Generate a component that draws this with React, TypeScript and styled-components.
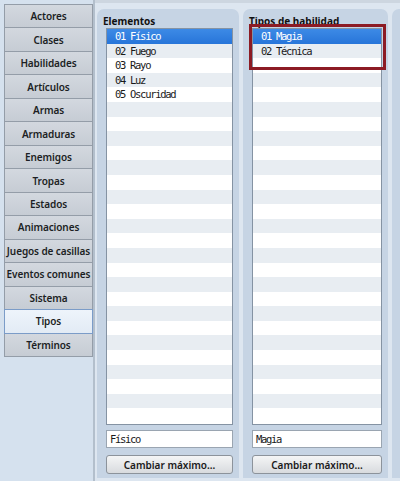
import React from 'react';
import styled, { createGlobalStyle } from 'styled-components';

const GlobalStyle = createGlobalStyle`
  html, body {
    margin: 0;
    padding: 0;
    background: #d6e1ee;
    font-family: "Noto Sans", "DejaVu Sans", sans-serif;
  }
`;

const menuItems = [
  'Actores', 'Clases', 'Habilidades', 'Artículos', 'Armas', 'Armaduras',
  'Enemigos', 'Tropas', 'Estados', 'Animaciones', 'Juegos de casillas',
  'Eventos comunes', 'Sistema', 'Tipos', 'Términos',
];

const elementos = ['01 Físico', '02 Fuego', '03 Rayo', '04 Luz', '05 Oscuridad'];
const tiposHabilidad = ['01 Magia', '02 Técnica'];

const ROWS = 27;

const Window = styled.div`
  display: flex;
  width: 400px;
  height: 481px;
  overflow: hidden;
`;

const Sidebar = styled.div`
  width: 89px;
  flex-shrink: 0;
  padding: 4px 0 0 4px;
  display: flex;
  flex-direction: column;
  border-right: 2px solid #b3bfcc;
  background: #d5e1ee;
`;

const MenuButton = styled.div<{ $active?: boolean }>`
  height: 24.47px;
  flex-shrink: 0;
  box-sizing: border-box;
  display: flex;
  align-items: center;
  justify-content: center;
  font-size: 10px;
  font-weight: 600;
  color: #1c1f24;
  white-space: nowrap;
  letter-spacing: -0.1px;
  border: 1px solid ${p => (p.$active ? '#7b9cc8' : '#949da8')};
  background: ${p => (p.$active
    ? 'linear-gradient(#eef4fb, #e2ebf5)'
    : 'linear-gradient(#d3d8df, #c6ccd4)')};
  margin-top: -1px;
  position: relative;
  z-index: ${p => (p.$active ? 1 : 0)};
  &:first-child { margin-top: 0; }
`;

const Main = styled.div`
  flex: 1;
  display: flex;
  gap: 4px;
  padding: 9px 0 0 2px;
  background: linear-gradient(#cdd6e0 0, #cdd6e0 3px, #dde6f0 3px);
`;

const Panel = styled.div<{ $w: number }>`
  position: relative;
  width: ${p => p.$w}px;
  flex-shrink: 0;
  height: 469px;
  box-sizing: border-box;
  padding: 6px 6px 0 9px;
  background: #c6d4e4;
  border-radius: 7px 7px 0 0;
  display: flex;
  flex-direction: column;
`;

const PanelTitle = styled.div`
  font-size: 10px;
  font-weight: 700;
  color: #111;
  margin-left: -3px;
  height: 13px;
  line-height: 13px;
  white-space: nowrap;
`;

const List = styled.div`
  height: 397px;
  box-sizing: border-box;
  border: 1px solid #8593a3;
  background: #fff;
  overflow: hidden;
`;

const Row = styled.div<{ $selected?: boolean; $alt?: boolean }>`
  height: 14.6px;
  line-height: 14.6px;
  padding-left: 8px;
  font-family: "DejaVu Sans Mono", "Liberation Mono", monospace;
  font-size: 10.5px;
  letter-spacing: -1.3px;
  white-space: nowrap;
  color: ${p => (p.$selected ? '#fff' : '#1a1a1a')};
  background: ${p => (p.$selected
    ? 'linear-gradient(#3d8ae6, #2775d9)'
    : p.$alt ? '#e8edf2' : '#ffffff')};
`;

const TextField = styled.div`
  margin-top: 5px;
  height: 18px;
  box-sizing: border-box;
  border: 1px solid #9aa5b1;
  background: #fff;
  padding-left: 3px;
  line-height: 16px;
  font-family: "DejaVu Sans Mono", "Liberation Mono", monospace;
  font-size: 10.5px;
  letter-spacing: -1.3px;
  color: #1a1a1a;
`;

const ActionButton = styled.div`
  margin-top: 7px;
  height: 19px;
  box-sizing: border-box;
  border: 1px solid #8c939b;
  border-radius: 3px;
  background: linear-gradient(#f4f5f6, #d8dbde);
  display: flex;
  align-items: center;
  justify-content: center;
  font-size: 10px;
  font-weight: 600;
  color: #1a1a1a;
`;

const Highlight = styled.div`
  position: absolute;
  left: 6px;
  top: 15px;
  width: 137px;
  height: 46px;
  box-sizing: border-box;
  border: 3px solid #8c1b24;
  pointer-events: none;
`;

const TypeList: React.FC<{ items: string[] }> = ({ items }) => (
  <List>
    {Array.from({ length: ROWS }).map((_, i) => (
      <Row key={i} $selected={i === 0} $alt={i % 2 === 1}>
        {items[i] ?? ''}
      </Row>
    ))}
  </List>
);

const App: React.FC = () => {
  return (
    <>
      <GlobalStyle />
      <Window>
        <Sidebar>
          {menuItems.map(m => (
            <MenuButton key={m} $active={m === 'Tipos'}>{m}</MenuButton>
          ))}
        </Sidebar>
        <Main>
          <Panel $w={142}>
            <PanelTitle>Elementos</PanelTitle>
            <TypeList items={elementos} />
            <TextField>Físico</TextField>
            <ActionButton>Cambiar máximo...</ActionButton>
          </Panel>
          <Panel $w={145}>
            <PanelTitle>Tipos de habilidad</PanelTitle>
            <TypeList items={tiposHabilidad} />
            <TextField>Magia</TextField>
            <ActionButton>Cambiar máximo...</ActionButton>
            <Highlight />
          </Panel>
          <Panel $w={60} />
        </Main>
      </Window>
    </>
  );
};

export default App;
